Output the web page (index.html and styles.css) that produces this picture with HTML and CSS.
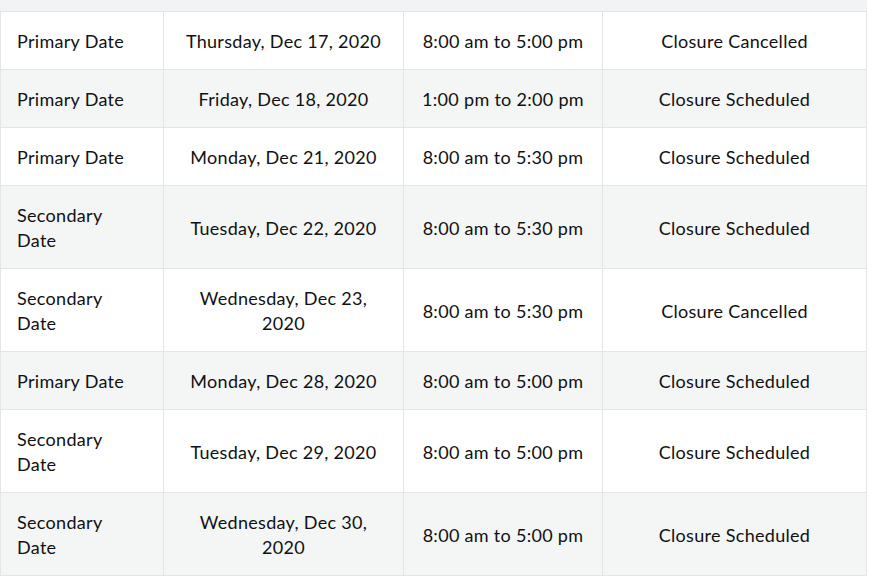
FILE: index.html
```html
<!DOCTYPE html>
<html lang="en">
<head>
<meta charset="utf-8">
<title>Closure Dates</title>
<link rel="stylesheet" href="styles.css">
</head>
<body>
<table class="closures">
  <colgroup>
    <col class="c-type">
    <col class="c-date">
    <col class="c-time">
    <col class="c-status">
  </colgroup>
  <thead>
    <tr><th></th><th></th><th></th><th></th></tr>
  </thead>
  <tbody>
    <tr><td class="type">Primary Date</td><td>Thursday, Dec 17, 2020</td><td>8:00 am to 5:00 pm</td><td>Closure Cancelled</td></tr>
    <tr><td class="type">Primary Date</td><td>Friday, Dec 18, 2020</td><td>1:00 pm to 2:00 pm</td><td>Closure Scheduled</td></tr>
    <tr><td class="type">Primary Date</td><td>Monday, Dec 21, 2020</td><td>8:00 am to 5:30 pm</td><td>Closure Scheduled</td></tr>
    <tr><td class="type">Secondary Date</td><td>Tuesday, Dec 22, 2020</td><td>8:00 am to 5:30 pm</td><td>Closure Scheduled</td></tr>
    <tr><td class="type">Secondary Date</td><td>Wednesday, Dec 23, 2020</td><td>8:00 am to 5:30 pm</td><td>Closure Cancelled</td></tr>
    <tr><td class="type">Primary Date</td><td>Monday, Dec 28, 2020</td><td>8:00 am to 5:00 pm</td><td>Closure Scheduled</td></tr>
    <tr><td class="type">Secondary Date</td><td>Tuesday, Dec 29, 2020</td><td>8:00 am to 5:00 pm</td><td>Closure Scheduled</td></tr>
    <tr><td class="type">Secondary Date</td><td>Wednesday, Dec 30, 2020</td><td>8:00 am to 5:00 pm</td><td>Closure Scheduled</td></tr>
  </tbody>
</table>
</body>
</html>
```
FILE: styles.css
```css
html, body {
  margin: 0;
  padding: 0;
  background: #ffffff;
}
body {
  font-family: Lato, "Liberation Sans", sans-serif;
  font-size: 18px;
  line-height: 25px;
  letter-spacing: 0.3px;
  color: #111111;
}
.closures {
  width: 866px;
  table-layout: fixed;
  border-collapse: collapse;
  margin-top: -1px;
}
.c-type { width: 163px; }
.c-date { width: 240px; }
.c-time { width: 199px; }
.c-status { width: 264px; }
.closures thead th {
  height: 11px;
  padding: 0;
  background: #f2f3f5;
  border: 1px solid #f2f3f5;
  border-bottom: 1px solid #e3e6e9;
}
.closures td {
  border: 1px solid #e3e6e9;
  padding: 17px 16px 15px;
  text-align: center;
  vertical-align: middle;
  font-weight: normal;
}
.closures td.type {
  text-align: left;
  padding-right: 26px;
}
.closures tbody tr:nth-child(even) td {
  background: #f4f5f5;
}
```
